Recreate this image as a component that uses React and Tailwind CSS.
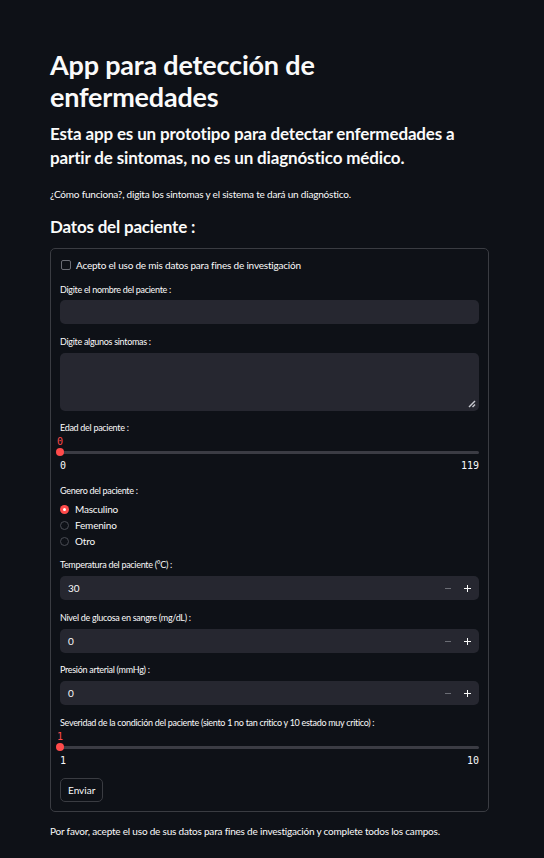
import React from "react";

const F = { fontFamily: "Lato, 'Noto Sans', sans-serif" };

function Label({ children, className = "" }) {
  return (
    <div className={"h-[14px] flex items-center text-[9px] tracking-[-0.3px] text-[#fafafa] " + className}>{children}</div>
  );
}

function NumberInput({ value, className = "" }) {
  return (
    <div className={"h-[24px] rounded-[5px] bg-[#262730] flex items-center pl-[8px] pr-[8px] " + className}>
      <span className="flex-1 text-[10px] text-[#fafafa]">{value}</span>
      <span className="w-[6px] h-[1px] bg-[#6b6d75] mr-[13px]"></span>
      <span className="relative w-[7px] h-[7px]">
        <span className="absolute left-0 top-[3px] w-[7px] h-[1.5px] bg-[#fafafa]"></span>
        <span className="absolute left-[2.75px] top-0 w-[1.5px] h-[7px] bg-[#fafafa]"></span>
      </span>
    </div>
  );
}

function Slider({ value, min, max }) {
  return (
    <div>
      <div className="h-[12px] flex items-center text-[10px] text-[#ff4b4b] -ml-[3px]" style={{ fontFamily: "'DejaVu Sans Mono', monospace" }}>
        <span>{value}</span>
      </div>
      <div className="h-[10px] relative flex items-center">
        <div className="w-full h-[3px] bg-[#3b3c44] rounded-full"></div>
        <div className="absolute left-[-4px] top-[1px] w-[8px] h-[8px] rounded-full bg-[#ff4b4b]"></div>
      </div>
      <div className="mt-[2px] h-[12px] flex items-center justify-between text-[10px] text-[#fafafa]" style={{ fontFamily: "'DejaVu Sans Mono', monospace" }}>
        <span>{min}</span>
        <span>{max}</span>
      </div>
    </div>
  );
}

function Radio({ label, checked }) {
  return (
    <div className="h-[16px] flex items-center">
      {checked ? (
        <span className="w-[9px] h-[9px] rounded-full bg-[#ff4b4b] flex items-center justify-center">
          <span className="w-[3px] h-[3px] rounded-full bg-[#ffffff]"></span>
        </span>
      ) : (
        <span className="w-[9px] h-[9px] rounded-full border border-[#4a4c54] bg-[#0e1117]"></span>
      )}
      <span className="ml-[6px] text-[10px] tracking-[-0.2px] text-[#fafafa]">{label}</span>
    </div>
  );
}

export default function App() {
  return (
    <div className="min-h-[858px] bg-[#0e1117] text-[#fafafa] pl-[50px] pr-[55px] pt-[49px]" style={F}>
      <h1 className="text-[27px] font-bold leading-[32px] tracking-[-0.2px] text-[#fafafa]">
        App para detección de<br />enfermedades
      </h1>
      <h3 className="mt-[9px] text-[17px] font-bold leading-[24px] tracking-[-0.15px] text-[#fafafa]">
        Esta app es un prototipo para detectar enfermedades a<br />partir de sintomas, no es un diagnóstico médico.
      </h3>
      <p className="mt-[17px] h-[14px] flex items-center text-[10px] tracking-[-0.2px] text-[#fafafa]">
        ¿Cómo funciona?, digita los sintomas y el sistema te dará un diagnóstico.
      </p>
      <h2 className="mt-[15px] h-[22px] flex items-center text-[17px] font-bold tracking-[-0.2px] text-[#fafafa]">
        Datos del paciente :
      </h2>

      <div className="mt-[10px] border border-[#3a3c42] rounded-[5px] pt-[8px] px-[9px] pb-[9px]">
        <div className="h-[16px] flex items-center">
          <span className="w-[10px] h-[10px] rounded-[2px] border border-[#6b6d75] ml-[1px]"></span>
          <span className="ml-[5px] text-[10px] tracking-[-0.2px] text-[#fafafa]">Acepto el uso de mis datos para fines de investigación</span>
        </div>

        <Label className="mt-[10px]">Digite el nombre del paciente :</Label>
        <div className="mt-[3px] h-[24px] rounded-[5px] bg-[#262730]"></div>

        <Label className="mt-[11px]">Digite algunos sintomas :</Label>
        <div className="mt-[4px] h-[58px] rounded-[5px] bg-[#262730] relative">
          <svg className="absolute right-[3px] bottom-[3px]" width="8" height="8" viewBox="0 0 8 8">
            <path d="M1 7 L7 1" stroke="#c8c9cf" strokeWidth="1.4" />
            <path d="M4.5 7 L7 4.5" stroke="#c8c9cf" strokeWidth="1.4" />
          </svg>
        </div>

        <Label className="mt-[10px]">Edad del paciente :</Label>
        <Slider value="0" min="0" max="119" />

        <Label className="mt-[13px]">Genero del paciente :</Label>
        <div className="mt-[3px] flex flex-col">
          <Radio label="Masculino" checked />
          <Radio label="Femenino" />
          <Radio label="Otro" />
        </div>

        <Label className="mt-[9px]">Temperatura del paciente (°C) :</Label>
        <NumberInput value="30" className="mt-[4px]" />

        <Label className="mt-[11px]">Nivel de glucosa en sangre (mg/dL) :</Label>
        <NumberInput value="0" className="mt-[4px]" />

        <Label className="mt-[10px]">Presión arterial (mmHg) :</Label>
        <NumberInput value="0" className="mt-[4px]" />

        <Label className="mt-[11px]">Severidad de la condición del paciente (siento 1 no tan critico y 10 estado muy critico) :</Label>
        <Slider value="1" min="1" max="10" />

        <button className="mt-[12px] h-[24px] px-[7px] rounded-[5px] border border-[#3a3c42] text-[10px] text-[#fafafa] bg-[#0e1117] flex items-center">
          Enviar
        </button>
      </div>

      <p className="mt-[12px] h-[14px] flex items-center text-[10px] tracking-[-0.2px] text-[#fafafa]">
        Por favor, acepte el uso de sus datos para fines de investigación y complete todos los campos.
      </p>
    </div>
  );
}
